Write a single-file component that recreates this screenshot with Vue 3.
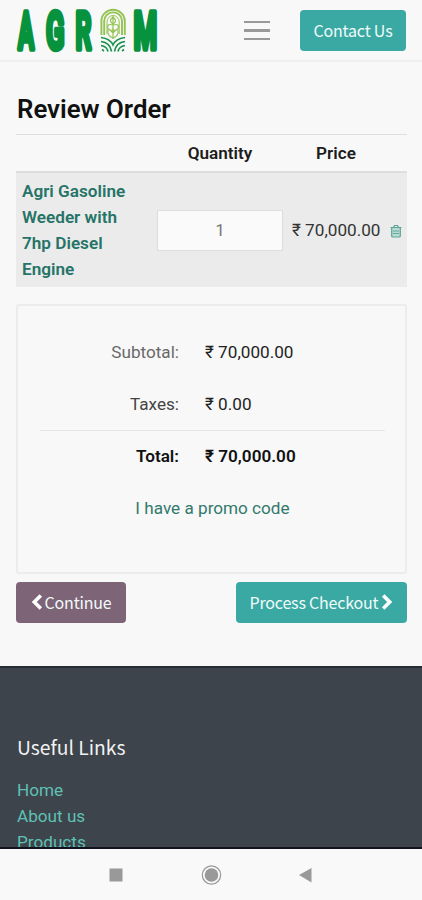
<script setup>
const logoLetters = [
  { ch: 'A', x: 17.9, sx: 0.46 },
  { ch: 'G', x: 45.9, sx: 0.52 },
  { ch: 'R', x: 75.4, sx: 0.48 },
  { ch: 'M', x: 133.6, sx: 0.52 },
]
const nameLines = ['Agri Gasoline', 'Weeder with', '7hp Diesel', 'Engine']
const links = ['Home', 'About us', 'Products']
</script>

<template>
  <div class="screen">
    <header class="topbar">
      <svg class="logo" width="164" height="60" viewBox="0 0 164 60" role="img">
        <g class="logo-text">
          <text v-for="l in logoLetters" :key="l.ch" :transform="`translate(${l.x} 49) scale(${l.sx} 1)`">{{ l.ch }}</text>
        </g>
        <g fill="none" stroke="#93c352" stroke-width="1.9">
          <path d="M101.4 35V21a11.7 11.2 0 0 1 23.4 0v14" />
          <path d="M104.2 35V21a8.900 8.600 0 0 1 17.800 0v14" />
          <path d="M107 34V22a6.100 6.500 0 0 1 12.200 0v12" stroke-width="1" />
          <path d="M113 16v23M113 17q-5 4 0 7q5-3 0-7M113 25q-7-2-5 4q5 3 5-1q0 4 5 1q2-6-5-4M108 30q-1 6 5 8q6-2 5-8M109 29l4 4l4-4" stroke-width="1.200" />
        </g>
        <g fill="none" stroke="#16914b" stroke-width="1.600">
          <path d="M101 37.500q9 1 12 7.500q3-6.500 12-7.500" />
          <path d="M101 41.500q9 1 10.500 10M125 41.500q-9 1-10.500 10" />
          <path d="M101 45.500q6 1 7 6M125 45.500q-6 1-7 6" />
          <path d="M102 49.500l2 1.500M124 49.500l-2 1.500" />
        </g>
      </svg>
      <button class="menu" aria-label="Menu"><i></i><i></i><i></i></button>
      <button class="btn contact">Contact Us</button>
    </header>

    <main>
      <h1><span>Review Order</span></h1>
      <div class="cart head">
        <span></span><b class="qty-h">Quantity</b><b class="price-h">Price</b>
      </div>
      <div class="cart item">
        <div class="name"><span v-for="n in nameLines" :key="n">{{ n }}</span></div>
        <div class="qty">1</div>
        <div class="price">₹ 70,000.00</div>
        <svg class="trash" width="12" height="14" viewBox="0 0 12 14" fill="none" stroke="#5ba497">
          <path d="M.5 3.500h11M3.500 3.500l1-2h3l1 2" stroke-width="1.200" />
          <path d="M1.700 4v8q0 1 1 1h6.600q1 0 1-1V4" stroke-width="1.200" fill="#b9dbd4" />
          <path d="M3 7h6M3 9.500h6" stroke-width=".9" />
        </svg>
      </div>

      <section class="summary">
        <div class="sum light"><span>Subtotal:</span><span>₹ 70,000.00</span></div>
        <div class="sum"><span>Taxes:</span><span>₹ 0.00</span></div>
        <div class="sum total"><span>Total:</span><span>₹ 70,000.00</span></div>
        <a class="promo">I have a promo code</a>
      </section>

      <div class="actions">
        <button class="btn continue">
          <svg width="12" height="16" viewBox="0 0 12 16"><path d="M9.800 1.500L3.300 8l6.500 6.500" fill="none" stroke="#fff" stroke-width="3.600" /></svg>
          <span>Continue</span>
        </button>
        <button class="btn checkout">
          <span>Process Checkout</span>
          <svg width="12" height="16" viewBox="0 0 12 16"><path d="M2.200 1.500L8.700 8l-6.500 6.500" fill="none" stroke="#fff" stroke-width="3.600" /></svg>
        </button>
      </div>
    </main>

    <footer>
      <h2>Useful Links</h2>
      <a v-for="l in links" :key="l">{{ l }}</a>
    </footer>

    <nav class="sysbar">
      <svg width="422" height="50" viewBox="0 0 422 50">
        <rect x="109.500" y="19.500" width="13" height="13" fill="#999" />
        <circle cx="211.500" cy="26" r="9.200" fill="none" stroke="#999" stroke-width="1.200" />
        <circle cx="211.500" cy="26" r="6.800" fill="#999" />
        <path d="M299 26l12.500-7v14.500z" fill="#999" />
      </svg>
    </nav>
  </div>
</template>

<style>
body { margin: 0; background: #f8f8f8; }
</style>

<style scoped>
* { box-sizing: border-box; }
.screen {
  width: 422px; height: 900px; overflow: hidden; display: flex; flex-direction: column;
  background: #f8f8f8; color: #222; font-family: Roboto, "Liberation Sans", sans-serif;
  font-size: 17.150px;
}
.topbar {
  height: 62px; flex: none; display: flex; align-items: flex-start; padding-right: 16px;
  border-bottom: 2px solid #efefef; background: #f8f8f8;
}
.logo { flex: none; display: block; overflow: visible; }
.logo-text { font: 700 52px Roboto, sans-serif; fill: #07923e; stroke: #07923e; stroke-width: 5.600px; stroke-linejoin: round; }
button { border: 0; padding: 0; background: none; }
.menu { margin: 20.500px 0 0 80px; width: 26px; display: flex; flex-direction: column; gap: 6px; }
.menu i { display: block; height: 2.500px; background: #999; }
.btn {
  height: 41px; border-radius: 4px; color: #f1fbfa; display: flex; align-items: center; justify-content: center;
  font-family: "Noto Sans CJK SC", sans-serif; font-size: 16px; letter-spacing: -.2px; line-height: 24px; white-space: nowrap; padding-bottom: 1px;
}
.contact { width: 106px; margin: 10px 0 0 auto; background: #3aa9a3; }
main { height: 604px; flex: none; padding: 0 15px 0 16px; }
h1 {
  margin: 0; height: 73px; padding: 31px 0 0 1px; font-size: 25.800px; line-height: 32px; font-weight: 600;
  color: #111; border-bottom: 1px solid #dedede; white-space: nowrap;
}
.cart { display: grid; grid-template-columns: 141px 126px 99px 25px; align-items: center; }
.head { height: 36px; padding-top: 0; color: #1c1c1c; }
.head b { text-align: center; font-weight: 600; }
.head .price-h { padding-left: 7px; }
.item { height: 116px; background: #ebebeb; border-top: 2px solid #dedede; }
.name { display: flex; flex-direction: column; margin-top: -1px; padding-left: 6px; line-height: 26px; color: #257467; font-weight: 600; }
.qty {
  height: 41px; border: 1px solid #ddd; background: #fafafa; color: #777;
  display: flex; align-items: center; justify-content: center;
}
.price { padding-left: 9px; white-space: nowrap; color: #333; }
.trash { margin: 2px 0 0 8px; }
.summary {
  margin: 17px 0 0 0; height: 270px; border: 2px solid #ececec; border-radius: 3px;
  padding: 20px 20px 0 22px; display: flex; flex-direction: column;
}
.sum { height: 52px; display: grid; grid-template-columns: 139px 1fr; column-gap: 26px; align-items: center; white-space: nowrap; }
.sum span:first-child { text-align: right; color: #444; }
.light span:first-child { color: #686868; }
.total { border-top: 1px solid #e5e5e5; padding-bottom: 1px; font-weight: 600; color: #111; }
.total span:first-child { color: #111; }
.promo { height: 52px; line-height: 52px; text-align: center; color: #32796c; }
.actions { margin-top: 8px; display: flex; justify-content: space-between; }
.continue { width: 110px; background: #7d6477; gap: 2px; }
.checkout { width: 171px; background: #3aa9a3; gap: 3px; }
footer {
  height: 183px; flex: none; overflow: hidden; background: #3d444c; padding: 65px 17px 0;
  display: flex; flex-direction: column; border-top: 2px solid #252c33; border-bottom: 2px solid #12121f;
}
h2 { margin: 0 0 16px; font: 400 19.300px/28px "Noto Sans CJK SC", sans-serif; color: #f2f2f2; }
footer a { line-height: 26px; flex: none; color: #5fc0b3; }
.sysbar { height: 51px; flex: none; background: #f9f9f9; }
.sysbar svg { display: block; }
</style>
